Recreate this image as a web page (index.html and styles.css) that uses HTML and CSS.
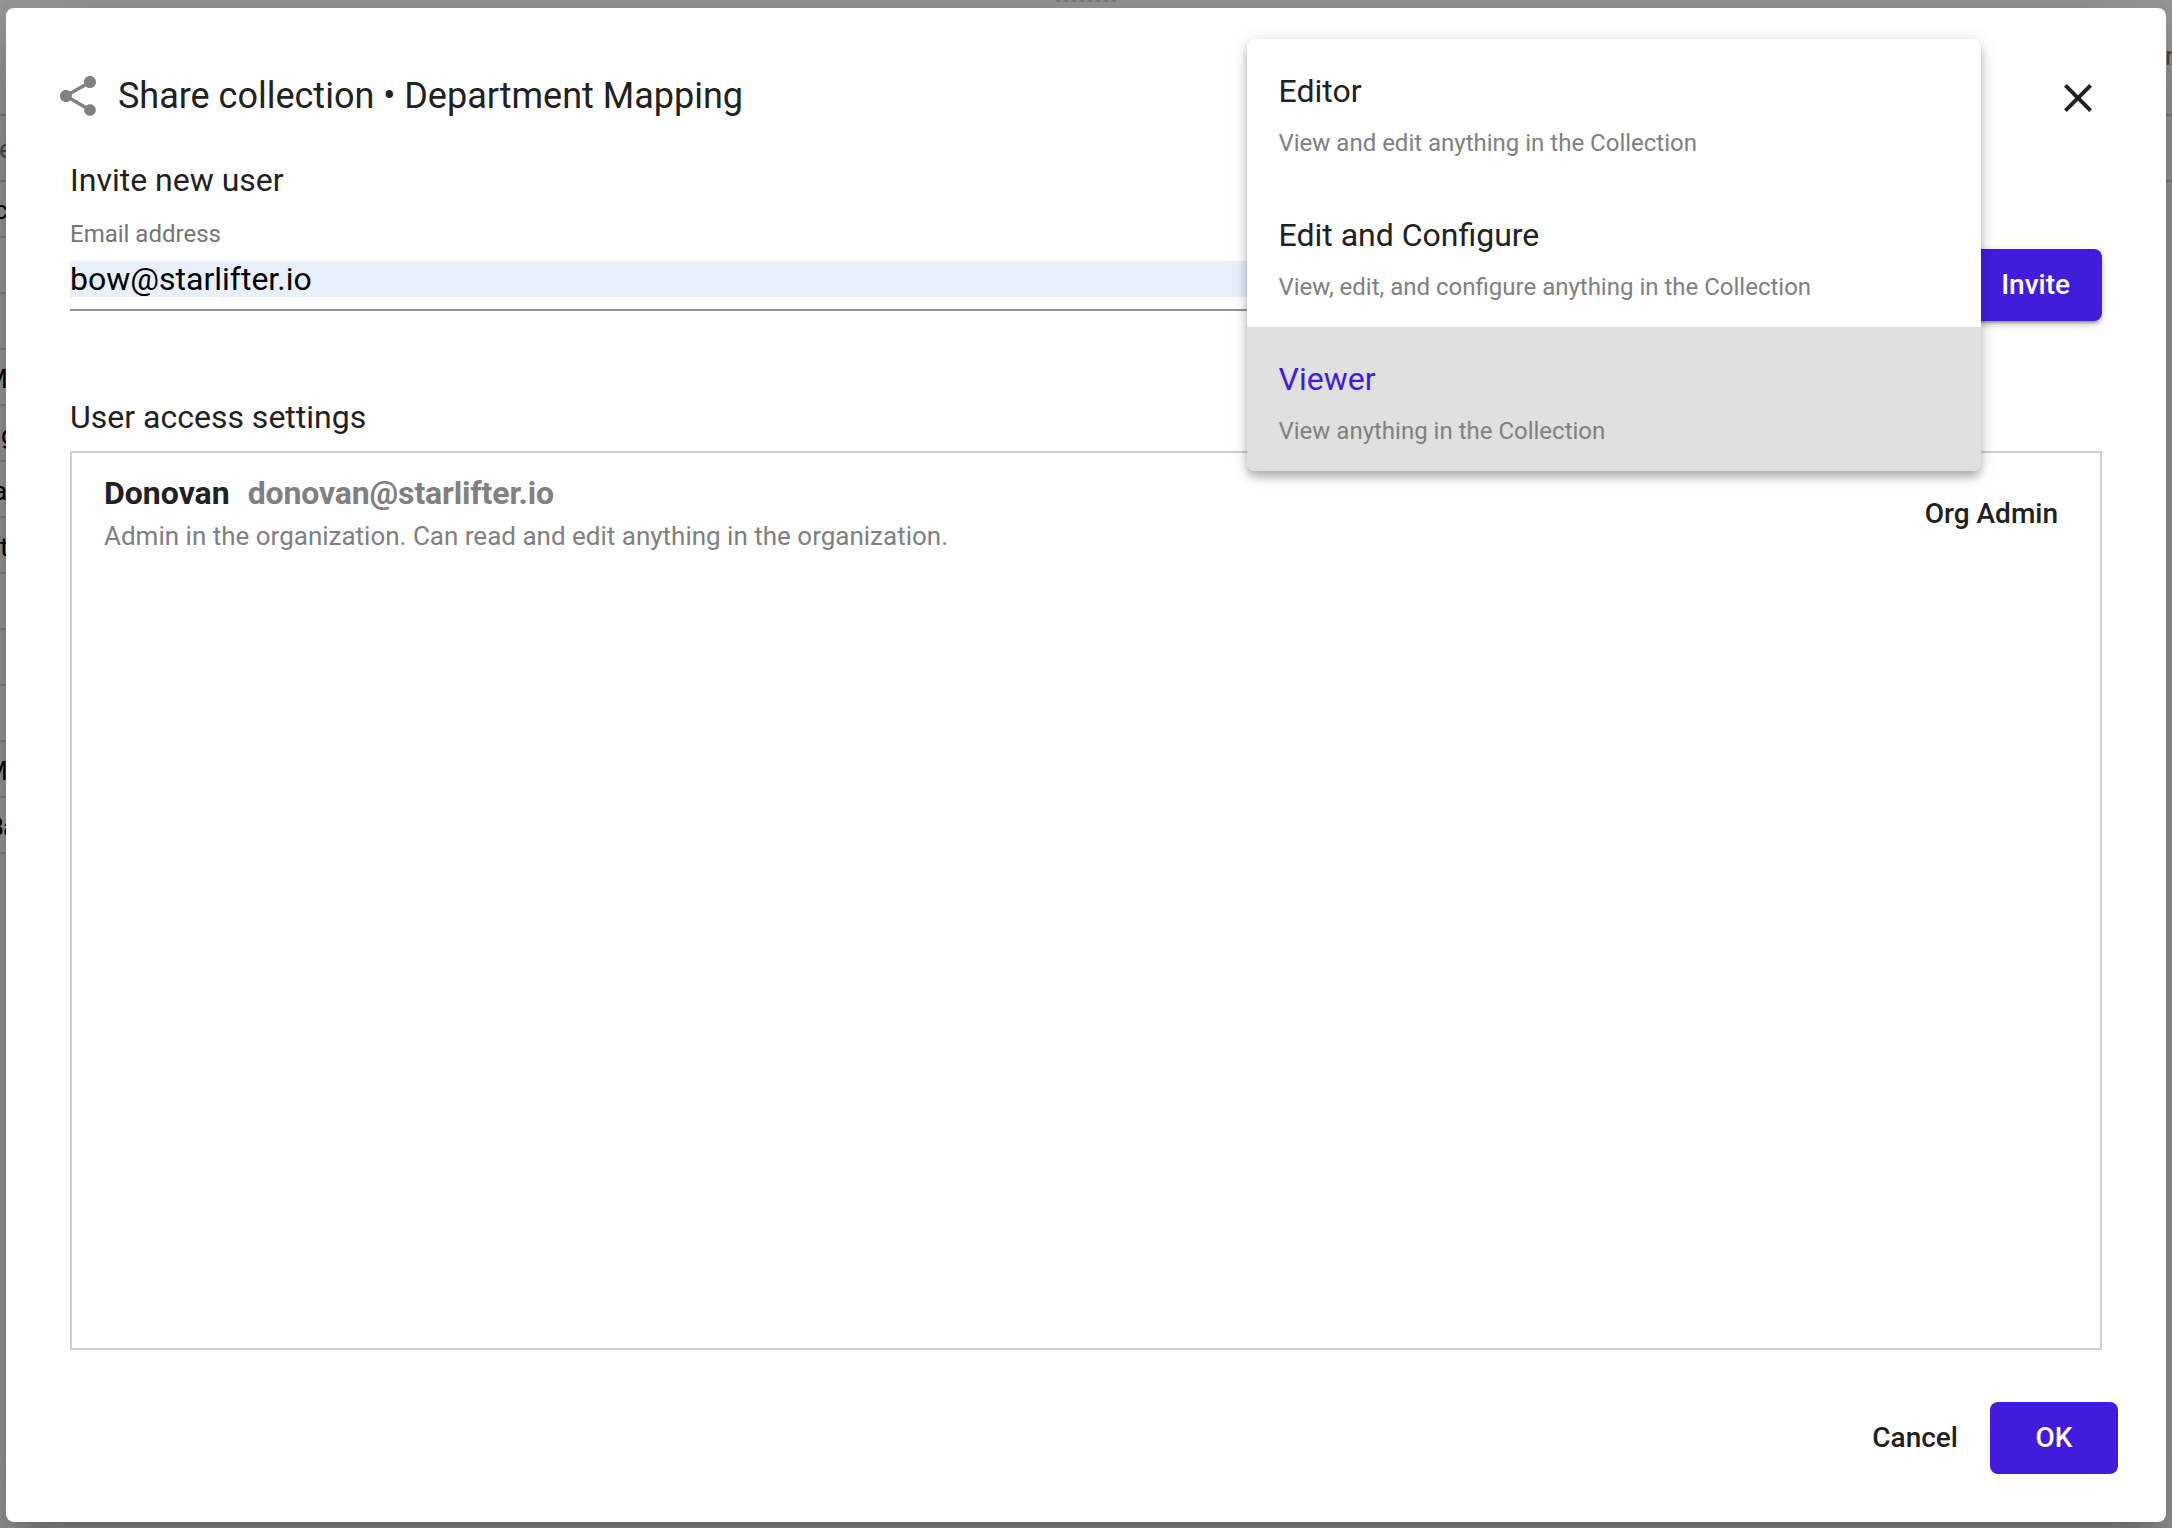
FILE: index.html
```html
<!DOCTYPE html>
<html lang="en">
<head>
<meta charset="utf-8">
<title>Share collection</title>
<link rel="stylesheet" href="styles.css">
</head>
<body>
<div class="page">
  <div class="page-left">
    <div class="row row-top"></div>
    <div class="row row-head cell-muted">e</div>
    <div class="row cell-c">c</div>
    <div class="row alt"></div>
    <div class="row"></div>
    <div class="row alt cell-m">M</div>
    <div class="row cell-g">g</div>
    <div class="row alt cell-a">a</div>
    <div class="row cell-t">t</div>
    <div class="row alt"></div>
    <div class="row"></div>
    <div class="row alt"></div>
    <div class="row cell-m">M</div>
    <div class="row alt cell-b">Ba</div>
  </div>
  <div class="page-handle"></div>
  <div class="page-right">
    <div class="row row-top cell-r">r</div>
    <div class="row row-head"></div>
  </div>
</div>

<main class="dialog">
  <header class="dialog-header">
    <svg class="icon icon-share" viewBox="0 0 24 24"><path d="M18 16.08c-.76 0-1.44.3-1.96.77L8.91 12.7c.05-.23.09-.46.09-.7s-.04-.47-.09-.7l7.05-4.11c.54.5 1.25.81 2.04.81 1.66 0 3-1.34 3-3s-1.34-3-3-3-3 1.34-3 3c0 .24.04.47.09.7L8.04 9.81C7.5 9.31 6.79 9 6 9c-1.66 0-3 1.34-3 3s1.34 3 3 3c.79 0 1.5-.31 2.04-.81l7.12 4.16c-.05.21-.08.43-.08.65 0 1.61 1.31 2.92 2.92 2.92s2.92-1.31 2.92-2.92-1.31-2.92-2.92-2.92z"/></svg>
    <h1 class="dialog-title">Share collection • Department Mapping</h1>
    <svg class="icon icon-close" viewBox="0 0 24 24"><path d="M19 6.41 17.59 5 12 10.59 6.41 5 5 6.41 10.59 12 5 17.59 6.41 19 12 13.41 17.59 19 19 17.59 13.41 12z"/></svg>
  </header>

  <section class="invite">
    <h2 class="section-title">Invite new user</h2>
    <div class="invite-row">
      <div class="field">
        <label class="field-label">Email address</label>
        <div class="field-input">bow@starlifter.io</div>
      </div>
      <button class="button button-raised">Invite</button>
    </div>
  </section>

  <section class="access">
    <h2 class="section-title">User access settings</h2>
    <div class="user-list">
      <div class="user">
        <div class="user-info">
          <div class="user-name"><span>Donovan</span><span class="user-email">donovan@starlifter.io</span></div>
          <div class="user-note">Admin in the organization. Can read and edit anything in the organization.</div>
        </div>
        <div class="user-role">Org Admin</div>
      </div>
    </div>
  </section>

  <footer class="dialog-actions">
    <button class="button button-text">Cancel</button>
    <button class="button button-ok">OK</button>
  </footer>
</main>

<div class="menu">
  <div class="option"><div class="option-name">Editor</div><div class="option-note">View and edit anything in the Collection</div></div>
  <div class="option"><div class="option-name">Edit and Configure</div><div class="option-note">View, edit, and configure anything in the Collection</div></div>
  <div class="option selected"><div class="option-name">Viewer</div><div class="option-note">View anything in the Collection</div></div>
</div>
</body>
</html>
```
FILE: styles.css
```css
* { box-sizing: border-box; }

body {
  margin: 0;
  width: 2172px;
  height: 1528px;
  overflow: hidden;
  position: relative;
  background: #999;
  color: #212121;
  font-family: Roboto, "Liberation Sans", sans-serif;
}

h1, h2 { margin: 0; font-weight: 400; }

/* Page behind the dialog */
.page {
  position: absolute;
  inset: 0;
  display: flex;
  justify-content: space-between;
}
.page-left, .page-right { width: 6px; overflow: hidden; }
.page-handle {
  width: 60px;
  height: 2px;
  background: repeating-linear-gradient(90deg, #7d7d7d 0 4px, #919191 4px 8px);
}
.row {
  height: 56px;
  border-bottom: 2px solid #858585;
  background: #9a9a9a;
  color: #000;
  font-size: 26px;
  line-height: 58px;
  white-space: nowrap;
}
.row.alt { background: #9b9d9b; }
.row-top { height: 116px; border-color: #7d7e82; }
.row-head { height: 66px; line-height: 66px; background: #999b99; border-color: #7d7e82; }
.cell-muted { color: #4a4a4a; text-indent: -1px; }
.cell-c { text-indent: -6px; line-height: 56px; }
.cell-m { text-indent: -15px; }
.cell-g { text-indent: 1px; }
.cell-a { text-indent: -7px; }
.cell-t { text-indent: 0; }
.cell-b { text-indent: -13px; font-weight: 700; }
.cell-r { color: #4a4a4a; line-height: 112px; text-indent: -1px; }

/* Dialog */
.dialog {
  position: absolute;
  left: 6px;
  top: 8px;
  width: 2160px;
  height: 1514px;
  padding: 64px 64px 48px;
  display: flex;
  flex-direction: column;
  border-radius: 8px;
  background: #fff;
  box-shadow: 0 22px 30px -14px rgba(0, 0, 0, .2), 0 48px 76px 6px rgba(0, 0, 0, .14), 0 18px 92px 16px rgba(0, 0, 0, .12);
}
.dialog-header {
  display: flex;
  height: 52px;
  margin: 0 0 0 -16px;
}
.icon { width: 48px; height: 48px; flex: none; }
.icon-share { fill: #808080; }
.icon-close { fill: #212121; margin: 2px 0 0 auto; }
.dialog-title {
  margin-left: 16px;
  font-size: 36px;
  line-height: 48px;
  letter-spacing: -.01px;
}
.section-title { font-size: 32px; line-height: 40px; }

.invite { height: 210px; padding-top: 36px; }
.invite-row { display: flex; gap: 32px; align-items: flex-start; }
.field { flex: 1; border-bottom: 2px solid #949494; height: 111px; }
.field-label {
  display: block;
  padding-top: 18px;
  font-size: 24px;
  line-height: 32px;
  height: 61px;
  color: #757575;
}
.field-input {
  height: 36px;
  font-size: 32px;
  line-height: 36px;
  color: #000;
  background: #e8f0fe;
}
.button {
  border: 0;
  border-radius: 8px;
  padding: 0 32px;
  height: 72px;
  font: 500 28px/72px Roboto, "Liberation Sans", sans-serif;
  color: #fff;
  background: #421cdd;
}
.button-raised {
  margin-top: 49px;
  box-shadow: 0 6px 2px -4px rgba(0, 0, 0, .2), 0 4px 4px rgba(0, 0, 0, .14), 0 2px 10px rgba(0, 0, 0, .12);
}

.access { padding-top: 63px; }
.user-list {
  height: 899px;
  margin-top: 14px;
  padding: 20px 42px 0 32px;
  border: 2px solid #d0d0d0;
}
.user { display: flex; justify-content: space-between; align-items: flex-start; }
.user-name { font-size: 32px; line-height: 40px; font-weight: 700; }
.user-email { margin-left: 18px; color: #808080; letter-spacing: -.14px; }
.user-note { font-size: 26px; line-height: 46px; color: #808080; }
.user-role { font-size: 28px; line-height: 82px; font-weight: 500; }

.dialog-actions {
  display: flex;
  justify-content: flex-end;
  margin: auto -16px 0 0;
}
.button-text { background: none; color: #212121; }
.button-ok { width: 128px; }

/* Role menu */
.menu {
  position: absolute;
  left: 1247px;
  top: 39px;
  width: 734px;
  height: 432px;
  border-radius: 8px;
  overflow: hidden;
  background: #fff;
  box-shadow: 0 4px 8px -2px rgba(0, 0, 0, .2), 0 8px 10px rgba(0, 0, 0, .14), 0 2px 20px rgba(0, 0, 0, .12);
}
.option { height: 144px; padding: 32px 31.5px 0; }
.option-name { font-size: 32px; line-height: 40px; }
.option-note { margin-top: 16px; font-size: 24px; line-height: 32px; color: #808080; }
.selected { background: #e0e0e0; }
.selected .option-name { color: #421cdd; }
```
